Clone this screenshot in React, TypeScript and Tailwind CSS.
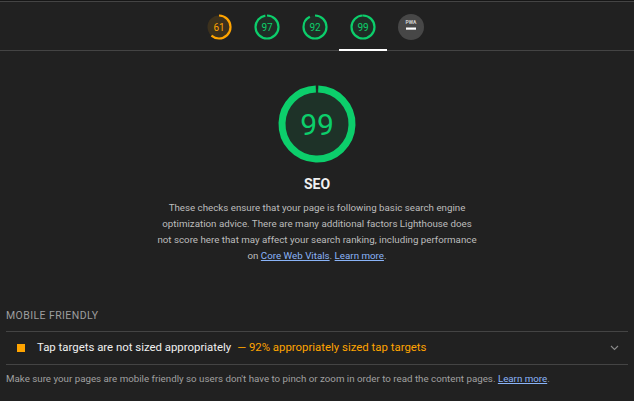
import React from "react";

function SmallGauge({ score, color, fill }: { score: number; color: string; fill: string }) {
  const r = 11.5;
  const c = 2 * Math.PI * r;
  return (
    <svg width="26" height="26" viewBox="0 0 26 26">
      <circle cx="13" cy="13" r={r} fill={fill} />
      <circle
        cx="13"
        cy="13"
        r={r}
        fill="none"
        stroke={color}
        strokeWidth="2.2"
        strokeDasharray={`${(c * score) / 100} ${c}`}
        transform="rotate(-90 13 13)"
      />
      <text x="13" y="16.5" textAnchor="middle" fontSize="10" fill={color} fontFamily="Roboto, sans-serif">
        {score}
      </text>
    </svg>
  );
}

function PwaBadge() {
  return (
    <svg width="26" height="26" viewBox="0 0 26 26">
      <circle cx="13" cy="13" r="13" fill="#474747" />
      <text x="13" y="10" textAnchor="middle" fontSize="5" fill="#d0d0d0" fontFamily="Roboto, sans-serif" fontWeight="700">
        PWA
      </text>
      <rect x="8" y="13.5" width="10" height="2.2" fill="#ffffff" />
    </svg>
  );
}

function BigGauge() {
  const r = 35;
  const c = 2 * Math.PI * r;
  return (
    <svg width="80" height="80" viewBox="0 0 80 80">
      <circle cx="40" cy="40" r={r} fill="rgba(12,206,107,0.1)" />
      <circle
        cx="40"
        cy="40"
        r={r}
        fill="none"
        stroke="#0cce6b"
        strokeWidth="7"
        strokeDasharray={`${c * 0.99 - 0.6} ${c}`}
        transform="rotate(-88 40 40)"
      />
      <text x="40" y="51" textAnchor="middle" fontSize="30" fill="#0cce6b" fontFamily="Roboto, sans-serif">
        99
      </text>
    </svg>
  );
}

export default function App() {
  return (
    <div
      className="w-[634px] h-[401px] overflow-hidden bg-[#212121] text-[#e8e8e8]"
      style={{ fontFamily: "Roboto, 'Liberation Sans', sans-serif" }}
    >
      <div className="h-px bg-[#161616]" />
      <div className="h-px bg-[#444444]" />
      <div className="flex h-[49px] border-b border-[#444444] justify-center pr-[4px]">
        <div className="w-[48px] flex items-center justify-center pt-[1px]">
          <SmallGauge score={61} color="#ffa400" fill="rgba(255,164,0,0.12)" />
        </div>
        <div className="w-[48px] flex items-center justify-center pt-[1px]">
          <SmallGauge score={97} color="#0cce6b" fill="rgba(12,206,107,0.08)" />
        </div>
        <div className="w-[48px] flex items-center justify-center pt-[1px]">
          <SmallGauge score={92} color="#0cce6b" fill="rgba(12,206,107,0.08)" />
        </div>
        <div className="w-[48px] flex items-center justify-center pt-[1px] relative">
          <SmallGauge score={99} color="#0cce6b" fill="rgba(12,206,107,0.08)" />
          <div className="absolute left-0 right-0 bottom-[-1px] h-[2px] bg-white" />
        </div>
        <div className="w-[48px] flex items-center justify-center pt-[1px]">
          <PwaBadge />
        </div>
      </div>

      <div className="flex flex-col items-center pt-[33px]">
        <BigGauge />
        <div className="mt-[12px] text-[14px] leading-[16px] font-bold text-[#f0f0f0]">SEO</div>
        <p className="mt-[8px] w-[321px] text-center text-[9.75px] leading-[16px] text-[#bdbdbd]">
          These checks ensure that your page is following basic search engine optimization advice. There are many
          additional factors Lighthouse does not score here that may affect your search ranking, including performance
          on{" "}
          <span className="text-[#8ab4f8] underline">Core Web Vitals</span>.{" "}
          <span className="text-[#8ab4f8] underline">Learn more</span>.
        </p>
      </div>

      <div className="mt-[46px] px-[6px]">
        <div className="pb-[9px] text-[10.5px] leading-[12px] tracking-[0.04em] text-[#9e9e9e]">MOBILE FRIENDLY</div>
        <div className="border-t border-b border-[#444444] h-[34px] flex items-center pl-[11px] pr-[9px]">
          <div className="w-[8px] h-[8px] bg-[#ffa400]" />
          <span className="ml-[12px] text-[11.4px] text-[#f0f0f0]">Tap targets are not sized appropriately</span>
          <span className="ml-[6px] text-[11.4px] text-[#ffa400]">— 92% appropriately sized tap targets</span>
          <svg className="ml-auto" width="9" height="6" viewBox="0 0 9 6">
            <path d="M1 1 L4.5 4.5 L8 1" fill="none" stroke="#8a8a8a" strokeWidth="1.1" />
          </svg>
        </div>
        <div className="pt-[7px] text-[9.75px] leading-[14px] text-[#a0a0a0]">
          Make sure your pages are mobile friendly so users don't have to pinch or zoom in order to read the content
          pages. <span className="text-[#8ab4f8] underline">Learn more</span>.
        </div>
      </div>
    </div>
  );
}
